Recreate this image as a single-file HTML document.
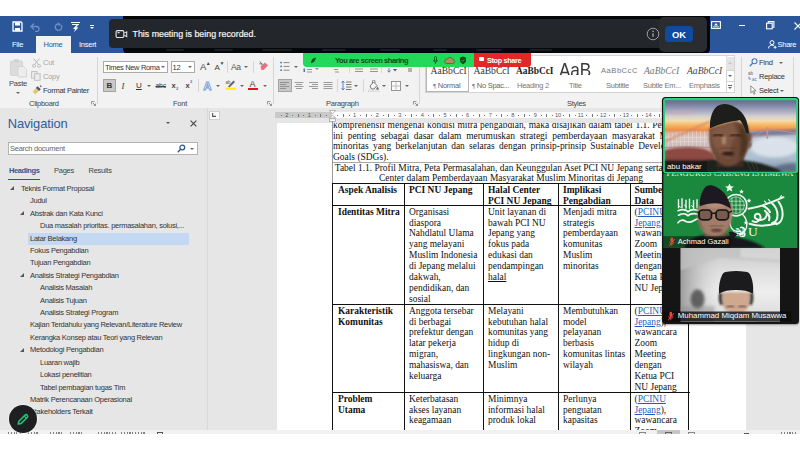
<!DOCTYPE html>
<html><head><meta charset="utf-8"><title>Word - Zoom share</title>
<style>
html,body{margin:0;padding:0;}
body{width:800px;height:450px;position:relative;overflow:hidden;background:#fff;font-family:"Liberation Sans",sans-serif;}
.a{position:absolute;}
.ui{font-family:"Liberation Sans",sans-serif;font-size:7.5px;letter-spacing:-0.26px;color:#333;white-space:nowrap;line-height:9px;}
.t{position:absolute;white-space:nowrap;}
.sep{position:absolute;width:1px;background:#d6d6d6;}
.doc{font-family:"Liberation Serif",serif;font-size:9.45px;line-height:11px;color:#111;}
.cell{position:absolute;white-space:nowrap;font-family:"Liberation Serif",serif;font-size:9.45px;line-height:10.9px;color:#111;}
.cell b{font-weight:bold;}
.lk{color:#1f5fbf;text-decoration:underline;}
.nav{position:absolute;font-family:"Liberation Sans",sans-serif;font-size:7.5px;letter-spacing:-0.26px;color:#333;white-space:nowrap;line-height:10px;}
.tri{position:absolute;width:0;height:0;border-left:4px solid transparent;border-bottom:4px solid #555;}
.dd{position:absolute;width:0;height:0;border-left:2px solid transparent;border-right:2px solid transparent;border-top:2.200px solid #666;}
</style></head>
<body>
<!-- ===== Title bar ===== -->
<div class="a" id="titlebar" style="left:0;top:16px;width:800px;height:37px;background:#2b579a;"></div>

<!-- quick access icons -->
<svg class="a" style="left:12px;top:21px" width="11" height="11" viewBox="0 0 11 11"><path d="M1 1h8l1 1v8H1z" fill="none" stroke="#fff" stroke-width="1.3"/><rect x="3" y="1.5" width="5" height="3" fill="#fff"/><rect x="3" y="7" width="5" height="3" fill="#fff"/></svg>
<svg class="a" style="left:30px;top:22px" width="11" height="10" viewBox="0 0 11 10"><path d="M2 4.5h4.5a2.5 2.5 0 0 1 0 5H5" fill="none" stroke="#6f8fc6" stroke-width="1.3"/><path d="M4 1.5L1 4.5l3 3" fill="none" stroke="#6f8fc6" stroke-width="1.3"/></svg>
<svg class="a" style="left:53px;top:22px" width="11" height="10" viewBox="0 0 11 10"><path d="M8.3 3.2A3.3 3.3 0 1 1 5 1.8" fill="none" stroke="#6f8fc6" stroke-width="1.3"/><path d="M5.2 0v3.6h3.4z" fill="#6f8fc6"/></svg>
<svg class="a" style="left:70px;top:21px" width="11" height="11" viewBox="0 0 11 11"><path d="M1 1.5h9M2 3.5h7" stroke="#fff" stroke-width="1.1"/><path d="M6.5 4L3 8h2.2L4 11l4.5-4.6H6.3L8 4z" fill="#fff"/></svg>
<div class="a" style="left:89.5px;top:24.5px;width:4px;height:1px;background:#fff"></div>
<div class="dd" style="left:89.5px;top:27px;border-top-color:#fff"></div>
<!-- tabs -->
<div class="a" style="left:36px;top:36px;width:34.5px;height:17px;background:#f2f2f2"></div>
<div class="t ui" style="left:12px;top:39.5px;color:#fff">File</div>
<div class="t ui" style="left:43.5px;top:39.5px;color:#2b579a">Home</div>
<div class="t ui" style="left:79px;top:39.5px;color:#fff">Insert</div>
<!-- window controls -->
<svg class="a" style="left:711px;top:21px" width="10" height="8" viewBox="0 0 10 8"><rect x=".6" y=".6" width="8.8" height="6.8" fill="none" stroke="#fff" stroke-width="1.1"/><path d="M5 2L3 4.6h4z" fill="#fff"/><path d="M2 5.8h6" stroke="#fff" stroke-width=".8"/></svg>
<div class="a" style="left:738.5px;top:25px;width:6.5px;height:1px;background:#fff"></div>
<svg class="a" style="left:766px;top:21px" width="9" height="9" viewBox="0 0 9 9"><rect x=".6" y="2.2" width="5.6" height="5.6" fill="none" stroke="#fff" stroke-width="1.1"/><path d="M2.3 2V.6h5.6v5.6H6.4" fill="none" stroke="#fff" stroke-width="1.1"/></svg>
<svg class="a" style="left:793.5px;top:21.5px" width="8" height="8" viewBox="0 0 8 8"><path d="M.5 .5l7 7M7.500 .5l-7 7" stroke="#fff" stroke-width="1.1"/></svg>
<svg class="a" style="left:767.5px;top:39.5px" width="9" height="9" viewBox="0 0 9 9"><circle cx="4" cy="2.6" r="2" fill="none" stroke="#fff" stroke-width="1"/><path d="M.6 8.400c0-2.200 1.500-3.300 3.400-3.300 1 0 1.700.3 2.200.8" fill="none" stroke="#fff" stroke-width="1"/><path d="M5.600 7.300h3M7.100 5.800v3" stroke="#fff" stroke-width=".9"/></svg>
<div class="t ui" style="left:777.5px;top:40px;color:#fff">Share</div>
<!-- zoom black band + toast -->
<div class="a" style="left:123px;top:16px;width:587px;height:37.500px;background:#060708;border-radius:0 0 5px 5px"></div>
<div class="a" style="left:166px;top:48.800px;width:18px;height:2.200px;background:#1b1d20;border-radius:1px"></div><div class="a" style="left:214px;top:48.800px;width:19px;height:2.200px;background:#1b1d20;border-radius:1px"></div><div class="a" style="left:262px;top:48.800px;width:30px;height:2.200px;background:#1b1d20;border-radius:1px"></div><div class="a" style="left:322px;top:48.800px;width:24px;height:2.200px;background:#1b1d20;border-radius:1px"></div><div class="a" style="left:380px;top:48.800px;width:20px;height:2.200px;background:#1b1d20;border-radius:1px"></div><div class="a" style="left:433px;top:48.800px;width:14px;height:2.200px;background:#1b1d20;border-radius:1px"></div><div class="a" style="left:476px;top:48.800px;width:26px;height:2.200px;background:#1b1d20;border-radius:1px"></div><div class="a" style="left:530px;top:48.800px;width:22px;height:2.200px;background:#1b1d20;border-radius:1px"></div>
<div class="a" style="left:108.500px;top:19px;width:553px;height:29px;background:#23262b;border-radius:4px"></div>
<div class="a" style="left:658.500px;top:17px;width:48px;height:34.500px;background:#2a2c2f;border-radius:5px"></div>
<svg class="a" style="left:115.300px;top:30px" width="13" height="8.600" viewBox="0 0 14 10"><rect x=".7" y=".7" width="9" height="8" rx="1.600" fill="none" stroke="#e6e6e6" stroke-width="1.300"/><path d="M10.300 3.600l2.800-1.500v5.600l-2.800-1.500" fill="none" stroke="#e6e6e6" stroke-width="1.200"/><rect x="2.400" y="2.400" width="2.400" height="1.400" fill="#e6e6e6"/></svg>
<div class="t" style="left:132.500px;top:29.200px;font-size:8.850px;line-height:11px;color:#f4f4f4;-webkit-text-stroke:.2px #f4f4f4">This meeting is being recorded.</div>
<svg class="a" style="left:646px;top:27px" width="14" height="14" viewBox="0 0 14 14"><circle cx="7" cy="7" r="5.800" fill="none" stroke="#9a9da2" stroke-width="1"/><path d="M7 6.200v3.600" stroke="#b4b6ba" stroke-width="1.200"/><circle cx="7" cy="4.300" r=".8" fill="#b4b6ba"/></svg>
<div class="a" style="left:665px;top:26px;width:28px;height:16px;background:#0e4a9e;border-radius:3.500px"></div>
<div class="t" style="left:665px;top:28.700px;width:28px;text-align:center;font-size:9.400px;line-height:11px;font-weight:bold;color:#fff">OK</div>
<!-- ===== Ribbon ===== -->
<div class="a" id="ribbon" style="left:0;top:53px;width:800px;height:55px;background:#f2f2f2;"></div>

<!-- clipboard group -->
<svg class="a" style="left:9px;top:58px" width="19" height="20" viewBox="0 0 19 20"><rect x="1.500" y="3" width="12" height="14.500" rx="1" fill="#dcdcdc" stroke="#cfcfcf" stroke-width=".8"/><rect x="5" y="1.200" width="5" height="3.400" rx="1" fill="#d0d0d0"/><path d="M9 8.500h5.500l3 3V19H9z" fill="#ececec" stroke="#d2d2d2" stroke-width=".8"/></svg>
<div class="t ui" style="left:9px;top:78.500px;color:#444">Paste</div>
<div class="dd" style="left:15.500px;top:91.500px"></div>
<svg class="a" style="left:32px;top:57.500px" width="9" height="10" viewBox="0 0 9 10"><path d="M1.500 .5l5 6M7.500 .5l-5 6" stroke="#b9b9b9" stroke-width="1"/><circle cx="2" cy="7.800" r="1.500" fill="none" stroke="#b9b9b9" stroke-width=".9"/><circle cx="7" cy="7.800" r="1.500" fill="none" stroke="#b9b9b9" stroke-width=".9"/></svg>
<div class="t ui" style="left:43px;top:58px;color:#a6a6a6">Cut</div>
<svg class="a" style="left:31px;top:71px" width="10" height="10" viewBox="0 0 10 10"><rect x=".6" y=".6" width="5.500" height="6.500" fill="#ededed" stroke="#bcbcbc" stroke-width=".9"/><rect x="3.600" y="2.800" width="5.500" height="6.500" fill="#ededed" stroke="#bcbcbc" stroke-width=".9"/></svg>
<div class="t ui" style="left:43px;top:71.500px;color:#a6a6a6">Copy</div>
<svg class="a" style="left:31.500px;top:85px" width="10" height="10" viewBox="0 0 10 10"><path d="M5.500 1.200L8.800 4.300 7 6 3.800 3z" fill="#555"/><path d="M3.600 3.400L6.600 6.200 3.200 9.400.6 6.600z" fill="#e8c471"/><path d="M8 .6l1.300 1.200" stroke="#555" stroke-width="1.200"/></svg>
<div class="t ui" style="left:43px;top:85.500px;color:#333">Format Painter</div>
<div class="t ui" style="left:29px;top:98.500px;color:#444">Clipboard</div>
<svg class="a lau" style="left:91px;top:101px" width="5" height="5" viewBox="0 0 5 5"><path d="M.4 3.500V.4h3.100" fill="none" stroke="#777" stroke-width=".8"/><path d="M1.800 1.800l2.600 2.600M4.500 2.600v2H2.600" fill="none" stroke="#777" stroke-width=".8"/></svg>
<div class="sep" style="left:97px;top:57px;height:47px"></div>
<!-- font group -->
<div class="a" style="left:102.500px;top:60.500px;width:65px;height:12px;background:#fff;border:.7px solid #ababab;box-sizing:border-box"></div>
<div class="t ui" style="left:105px;top:62.500px;color:#333;letter-spacing:-.34px">Times New Roma</div>
<div class="dd" style="left:161.300px;top:66px"></div>
<div class="a" style="left:170.500px;top:60.500px;width:24px;height:12px;background:#fff;border:.7px solid #ababab;box-sizing:border-box"></div>
<div class="t ui" style="left:172.500px;top:62.500px;color:#333">12</div>
<div class="dd" style="left:187.500px;top:66px"></div>
<div class="t" style="left:200px;top:61px;font-size:9.500px;line-height:11px;color:#444">A</div><div class="t" style="left:205.800px;top:59.500px;font-size:5px;line-height:6px;color:#444">▲</div>
<div class="t" style="left:214.500px;top:62.500px;font-size:8px;line-height:10px;color:#444">A</div><div class="t" style="left:219.500px;top:60px;font-size:5px;line-height:6px;color:#444">▼</div>
<div class="sep" style="left:227px;top:61px;height:12px"></div>
<div class="t" style="left:231px;top:61.500px;font-size:8.500px;line-height:10px;color:#555;letter-spacing:-.3px">Aa</div>
<div class="dd" style="left:243.500px;top:66px"></div>
<div class="sep" style="left:253px;top:61px;height:12px"></div>
<svg class="a" style="left:257.500px;top:59.500px" width="11" height="13" viewBox="0 0 11 13"><path d="M2.500 6.500L7 2.500l3 3-4.500 4.500H3.500z" fill="#e8707f"/><path d="M2 1.500l2.500 4" stroke="#777" stroke-width="1"/><path d="M1.400 3.800h3" stroke="#4b77be" stroke-width=".9"/></svg>
<div class="a" style="left:103px;top:79px;width:12.500px;height:13px;background:#c8c8c8;border:.8px solid #a3a3a3;box-sizing:border-box"></div>
<div class="t" style="left:106.500px;top:80.500px;font-size:8px;line-height:10px;font-weight:bold;color:#333">B</div>
<div class="t" style="left:121.500px;top:80.500px;font:italic 8.500px/10px 'Liberation Serif',serif;color:#333">I</div>
<div class="t" style="left:136px;top:80.500px;font-size:8px;line-height:10px;color:#333;text-decoration:underline">U</div>
<div class="dd" style="left:146.500px;top:85px"></div>
<div class="t" style="left:155.500px;top:80.500px;font-size:6.800px;line-height:10px;color:#444;text-decoration:line-through;letter-spacing:-.2px">abc</div>
<div class="t" style="left:171.500px;top:80.500px;font-size:7.500px;line-height:10px;font-weight:bold;color:#444">x</div><div class="t" style="left:176px;top:86px;font-size:4px;line-height:5px;font-weight:bold;color:#4b77be">2</div>
<div class="t" style="left:185.500px;top:80.500px;font-size:7.500px;line-height:10px;font-weight:bold;color:#444">x</div><div class="t" style="left:190px;top:79px;font-size:4px;line-height:5px;font-weight:bold;color:#4b77be">2</div>
<div class="sep" style="left:198px;top:79px;height:13px"></div>
<svg class="a" style="left:202px;top:78.500px" width="11" height="14" viewBox="0 0 11 14"><text x="5.500" y="11.300" text-anchor="middle" font-family="Liberation Sans, sans-serif" font-weight="bold" font-size="11.500" fill="#fafcff" stroke="#6c9ad6" stroke-width=".8">A</text></svg>
<div class="dd" style="left:215.500px;top:85px"></div>
<svg class="a" style="left:224.500px;top:79px" width="12" height="12" viewBox="0 0 12 12"><rect x=".5" y="8.800" width="10.500" height="2" fill="#fff200"/><path d="M3 7.500L8.500 1.500l1.500 1.500-5.500 5.500z" fill="#666"/><text x=".5" y="5" font-size="4.500" font-family="Liberation Sans" fill="#555">ab</text></svg>
<div class="dd" style="left:239.500px;top:85px"></div>
<div class="t" style="left:249.500px;top:79px;font-size:9px;line-height:10px;color:#444">A</div>
<div class="a" style="left:248px;top:88px;width:10px;height:2.200px;background:#e81123"></div>
<div class="dd" style="left:262.500px;top:85px"></div>
<div class="t ui" style="left:173px;top:98.500px;color:#444">Font</div>
<svg class="a" style="left:266.500px;top:101px" width="5" height="5" viewBox="0 0 5 5"><path d="M.4 3.500V.4h3.100" fill="none" stroke="#777" stroke-width=".8"/><path d="M1.800 1.800l2.600 2.600M4.500 2.600v2H2.600" fill="none" stroke="#777" stroke-width=".8"/></svg>
<div class="sep" style="left:273px;top:57px;height:47px"></div>
<!-- paragraph group -->
<svg class="a" style="left:279.500px;top:61px" width="10" height="11" viewBox="0 0 10 11"><g fill="#4b77be"><rect x=".3" y=".8" width="1.600" height="1.600"/><rect x=".3" y="4.600" width="1.600" height="1.600"/><rect x=".3" y="8.400" width="1.600" height="1.600"/></g><path d="M3.500 1.600h6M3.500 5.400h6M3.500 9.200h6" stroke="#8a8a8a" stroke-width="1"/></svg>
<div class="dd" style="left:293.500px;top:66px"></div>
<svg class="a" style="left:303px;top:67.500px" width="120" height="5" viewBox="0 0 120 5"><g stroke="#8a8a8a" stroke-width=".9"><path d="M4 1.500h5M4 4h5"/><path d="M31 1.500h4M32 4h4"/><path d="M52 1h8M52 3.500h8"/><path d="M67 1h8M67 3.500h8"/></g><rect x=".5" y=".5" width="1.500" height="3.500" fill="#4b77be"/><path d="M86 0v4M84.500 2.500L86 4.300l1.500-1.800" stroke="#4b77be" stroke-width=".9" fill="none"/><path d="M90 1l2 2.500 2-2.500z" fill="#555"/><path d="M106 0v4M108 0v4" stroke="#555" stroke-width=".8"/></svg>
<div class="dd" style="left:315px;top:67.500px;opacity:.7"></div>
<div class="sep" style="left:349px;top:67px;height:6px"></div>
<div class="sep" style="left:381px;top:67px;height:6px"></div>
<div class="a" style="left:278px;top:79px;width:13.500px;height:13px;background:#c8c8c8;border:.8px solid #a3a3a3;box-sizing:border-box"></div>
<svg class="a" style="left:280px;top:82px" width="56" height="8" viewBox="0 0 56 8"><g stroke="#858585" stroke-width=".8"><path d="M0 .5h9M0 2.500h6M0 4.500h9M0 6.500h6"/><path d="M14.500 .5h9M16 2.500h6M14.500 4.500h9M16 6.500h6"/><path d="M29 .5h9M32 2.500h6M29 4.500h9M32 6.500h6"/><path d="M43.500 .5h9M43.500 2.500h9M43.500 4.500h9M43.500 6.500h9"/></g></svg>
<div class="sep" style="left:337px;top:79px;height:13px"></div>
<svg class="a" style="left:340.500px;top:80px" width="11" height="11" viewBox="0 0 11 11"><path d="M2 1v9M.5 2.800L2 1l1.500 1.800M.5 8.200L2 10l1.500-1.800" fill="none" stroke="#4b77be" stroke-width=".9"/><path d="M5 2h5.500M5 4.500h5.500M5 7h5.500M5 9.500h5.500" stroke="#6a6a6a" stroke-width=".9"/></svg>
<div class="dd" style="left:353.500px;top:85px"></div>
<div class="sep" style="left:363px;top:79px;height:13px"></div>
<svg class="a" style="left:367.500px;top:79.500px" width="12" height="12" viewBox="0 0 12 12"><path d="M2 6L5.500 2l3.500 3.500L6 9H3.500z" fill="#f7f7f7" stroke="#6a6a6a" stroke-width=".9"/><path d="M4.500 3V1.200a1.200 1.200 0 0 1 2.400 0V3" fill="none" stroke="#6a6a6a" stroke-width=".8"/><path d="M9.500 6.500c.8 1.200 1.200 1.800 1.200 2.300a1.200 1.200 0 0 1-2.400 0c0-.5.400-1.100 1.200-2.300z" fill="#6a6a6a"/><rect x=".5" y="10" width="10.500" height="1.800" fill="#eee" stroke="#c8c8c8" stroke-width=".4"/></svg>
<div class="dd" style="left:381.500px;top:85px"></div>
<svg class="a" style="left:391px;top:80.500px" width="10" height="10" viewBox="0 0 10 10"><rect x=".5" y=".5" width="9" height="9" fill="#fafafa" stroke="#8a8a8a" stroke-width=".9"/><path d="M5 .5v9M.5 5h9" stroke="#b0b0b0" stroke-width=".8"/></svg>
<div class="dd" style="left:404.500px;top:85px"></div>
<div class="t ui" style="left:326px;top:98.500px;color:#444">Paragraph</div>
<svg class="a" style="left:412.500px;top:101px" width="5" height="5" viewBox="0 0 5 5"><path d="M.4 3.500V.4h3.100" fill="none" stroke="#777" stroke-width=".8"/><path d="M1.800 1.800l2.600 2.600M4.500 2.600v2H2.600" fill="none" stroke="#777" stroke-width=".8"/></svg>
<div class="sep" style="left:419px;top:57px;height:47px"></div>

<!-- styles gallery -->
<div class="a" style="left:425px;top:55px;width:309.500px;height:37.500px;background:#fff;border:.7px solid #d4d4d4;box-sizing:border-box"></div>
<div class="a" style="left:426px;top:57px;width:42.500px;height:34.500px;background:#fff;border:1.300px solid #b5b5b5;box-sizing:border-box"></div>
<div class="t" style="left:430.500px;top:65px;font:9.600px/12px 'Liberation Serif',serif;color:#333">AaBbCcI</div>
<div class="t ui" style="left:433px;top:80.500px;color:#666"><span style="font-size:6px">¶</span> Normal</div>
<div class="t" style="left:473.500px;top:65px;font:9.600px/12px 'Liberation Serif',serif;color:#333">AaBbCcI</div>
<div class="t ui" style="left:472px;top:80.500px;color:#666"><span style="font-size:6px">¶</span> No Spac...</div>
<div class="t" style="left:516px;top:65px;font:bold 9.400px/12px 'Liberation Serif',serif;color:#222">AaBbCcI</div>
<div class="t ui" style="left:517px;top:80.500px;color:#777">Heading 2</div>
<div class="a" style="left:555px;top:57px;width:42px;height:18px;overflow:hidden"><div class="t" style="left:4px;top:1.500px;font-size:17.200px;line-height:18px;color:#3a3a3a;letter-spacing:-.1px;transform:scaleY(1.22);transform-origin:0 0">AaB</div></div>
<div class="t ui" style="left:569px;top:80.500px;color:#777">Title</div>
<div class="t" style="left:601px;top:66px;font-size:7.700px;line-height:10px;color:#7a7a7a;letter-spacing:.45px">AaBbCcC</div>
<div class="t ui" style="left:606px;top:80.500px;color:#777">Subtitle</div>
<div class="t" style="left:644px;top:65px;font:italic 9.600px/12px 'Liberation Serif',serif;color:#777">AaBbCcI</div>
<div class="t ui" style="left:643px;top:80.500px;color:#777">Subtle Em...</div>
<div class="t" style="left:687px;top:65px;font:italic 9.600px/12px 'Liberation Serif',serif;color:#444">AaBbCcI</div>
<div class="t ui" style="left:689px;top:80.500px;color:#777">Emphasis</div>
<div class="a" style="left:725.500px;top:55px;width:9px;height:37.500px;background:#fff;border:.7px solid #d4d4d4;box-sizing:border-box"></div>
<div class="a" style="left:726px;top:57px;width:8px;height:13px;background:#e4e4e4"></div>
<div class="a" style="left:726px;top:70px;width:8px;height:.7px;background:#d4d4d4"></div>
<div class="a" style="left:726px;top:81px;width:8px;height:.7px;background:#d4d4d4"></div>
<div class="dd" style="left:728px;top:62px;border-top:none;border-bottom:2px solid #c4c4c4"></div>
<div class="dd" style="left:728px;top:75px;border-top-color:#666"></div>
<div class="a" style="left:728px;top:84.500px;width:4px;height:.8px;background:#666"></div>
<div class="dd" style="left:728px;top:86.500px;border-top-color:#666"></div>
<div class="t ui" style="left:567px;top:98.500px;color:#444">Styles</div>
<div class="sep" style="left:740.500px;top:57px;height:47px"></div>
<!-- editing -->
<svg class="a" style="left:748.500px;top:58px" width="9" height="9" viewBox="0 0 9 9"><circle cx="5.500" cy="3.300" r="2.500" fill="none" stroke="#4b77be" stroke-width="1.100"/><path d="M3.600 5.300L.8 8.200" stroke="#4b77be" stroke-width="1.300"/></svg>
<div class="t ui" style="left:759px;top:58px;color:#333">Find</div>
<div class="dd" style="left:778.500px;top:62px"></div>
<svg class="a" style="left:748px;top:71px" width="10" height="10" viewBox="0 0 10 10"><text x="0" y="4.200" font-size="4.500" font-family="Liberation Sans" fill="#666">ab</text><text x="4" y="9.500" font-size="4.500" font-family="Liberation Sans" fill="#4b77be">ac</text><path d="M1 5.500v2.500h2" fill="none" stroke="#4b77be" stroke-width=".8"/></svg>
<div class="t ui" style="left:759px;top:71.500px;color:#333">Replace</div>
<svg class="a" style="left:749.500px;top:84.500px" width="7" height="10" viewBox="0 0 7 10"><path d="M.8 .8v7l1.800-1.600 1.300 3 1.100-.5-1.300-2.900h2.400z" fill="#fafafa" stroke="#777" stroke-width=".8"/></svg>
<div class="t ui" style="left:759px;top:85.500px;color:#333">Select</div>
<div class="dd" style="left:780px;top:89.500px"></div>
<div class="sep" style="left:792.500px;top:57px;height:47px"></div>
<!-- zoom sharing bar -->
<div class="a" style="left:302.500px;top:53px;width:172px;height:14px;background:#23d959;border-radius:0 0 0 4px"></div>
<svg class="a" style="left:309.500px;top:56.500px" width="7" height="7" viewBox="0 0 7 7"><path d="M1 6c0-3 1.500-5 5-5.500C5.500 3 4.500 5.500 1.500 6.200z" fill="#0b4a1d"/></svg>
<div class="t" style="left:335px;top:55.500px;font-size:7.500px;line-height:9px;font-weight:bold;color:#0b4a1d;letter-spacing:-.42px">You are screen sharing</div>
<svg class="a" style="left:432px;top:55.500px" width="36" height="9" viewBox="0 0 36 9"><path d="M3.500 .5a1 1 0 0 1 1 1v2.500a1 1 0 0 1-2 0V1.500a1 1 0 0 1 1-1zM1.500 4a2 2 0 0 0 4 0M3.500 6v2" fill="none" stroke="#0b6a2a" stroke-width="1"/><path d="M14.500 7.500h6a2 2 0 0 0 .3-4 3 3 0 0 0-5.600-.4 2.200 2.200 0 0 0-.7 4.400z" fill="#b98a5a" stroke="#0b6a2a" stroke-width=".6"/><path d="M31 .6l3 1.100v2.800c0 1.800-1.300 3-3 3.800-1.700-.8-3-2-3-3.800V1.700z" fill="#0b4a1d"/><path d="M29.600 4.300l1 1 1.800-2" fill="none" stroke="#23d959" stroke-width=".8"/></svg>
<div class="a" style="left:474px;top:53px;width:56.500px;height:14.300px;background:#e02828;border-radius:0 0 3px 0"></div>
<div class="a" style="left:479px;top:56.500px;width:4.500px;height:4.500px;background:#fff;border-radius:.8px"></div>
<div class="t" style="left:487px;top:55.500px;font-size:7.300px;line-height:9px;font-weight:bold;color:#fff;letter-spacing:-.35px">Stop share</div>
<!-- ===== Workspace ===== -->
<div class="a" id="work" style="left:0;top:108px;width:800px;height:322px;background:#e6e6e6;"></div>

<!-- navigation pane -->
<div class="a" style="left:206.500px;top:108px;width:1px;height:321.500px;background:#d9d9d9"></div>
<div class="t" style="left:7.800px;top:116.300px;font-size:12.900px;line-height:16px;color:#2e5c9e;letter-spacing:-.12px">Navigation</div>
<div class="dd" style="left:166px;top:122px;border-left-width:2.500px;border-right-width:2.500px;border-top-width:2.500px;border-top-color:#555"></div>
<svg class="a" style="left:190px;top:120px" width="7" height="7" viewBox="0 0 7 7"><path d="M.6 .6l5.800 5.800M6.400 .6L.6 6.400" stroke="#444" stroke-width="1.100"/></svg>
<div class="a" style="left:8px;top:141.500px;width:189.500px;height:13.500px;background:#fff;border:.8px solid #b3b3b3;box-sizing:border-box"></div>
<div class="t ui" style="left:10px;top:144px;color:#666">Search document</div>
<svg class="a" style="left:176.500px;top:144px" width="9" height="9" viewBox="0 0 9 9"><circle cx="5.300" cy="3.500" r="2.400" fill="none" stroke="#2b579a" stroke-width="1.200"/><path d="M3.600 5.300L.8 8.200" stroke="#2b579a" stroke-width="1.400"/></svg>
<div class="dd" style="left:189.500px;top:148px"></div>
<div class="t ui" style="left:9px;top:165.500px;color:#2b579a;font-weight:bold;letter-spacing:-.42px">Headings</div>
<div class="a" style="left:8px;top:178.500px;width:31.500px;height:1.600px;background:#2b579a"></div>
<div class="t ui" style="left:54px;top:165.500px;color:#444">Pages</div>
<div class="t ui" style="left:88.500px;top:165.500px;color:#444">Results</div>
<div class="a" style="left:28px;top:233px;width:160.500px;height:12.300px;background:#c3d9f3"></div>
<div class="nav" style="left:21px;top:183.8px">Teknis Format Proposal</div>
<div class="tri" style="left:9.5px;top:186.3px"></div>
<div class="nav" style="left:30px;top:196.2px">Judul</div>
<div class="nav" style="left:30px;top:208.6px">Abstrak dan Kata Kunci</div>
<div class="tri" style="left:19.5px;top:211.1px"></div>
<div class="nav" style="left:40px;top:221.1px">Dua masalah prioritas. permasalahan, solusi,...</div>
<div class="nav" style="left:30px;top:233.5px">Latar Belakang</div>
<div class="nav" style="left:30px;top:245.9px">Fokus Pengabdian</div>
<div class="nav" style="left:30px;top:258.3px">Tujuan Pengabdian</div>
<div class="nav" style="left:30px;top:270.7px">Analisis Strategi Pengabdian</div>
<div class="tri" style="left:19.5px;top:273.2px"></div>
<div class="nav" style="left:40px;top:283.2px">Analisis Masalah</div>
<div class="nav" style="left:40px;top:295.6px">Analisis Tujuan</div>
<div class="nav" style="left:40px;top:308.0px">Analisis Strategi Program</div>
<div class="nav" style="left:30px;top:320.4px">Kajian Terdahulu yang Relevan/Literature Review</div>
<div class="nav" style="left:30px;top:332.8px">Kerangka Konsep atau Teori yang Relevan</div>
<div class="nav" style="left:30px;top:345.3px">Metodologi Pengabdian</div>
<div class="tri" style="left:19.5px;top:347.8px"></div>
<div class="nav" style="left:40px;top:357.7px">Luaran wajib</div>
<div class="nav" style="left:40px;top:370.1px">Lokasi penelitian</div>
<div class="nav" style="left:40px;top:382.5px">Tabel pembagian tugas Tim</div>
<div class="nav" style="left:30px;top:394.9px">Matrik Perencanaan Operasional</div>
<div class="nav" style="left:30px;top:407.4px">Stakeholders Terkait</div>

<div class="a" style="left:9.300px;top:405.300px;width:27.400px;height:27.400px;border-radius:14px;background:#1e1f21;z-index:5;box-shadow:0 0 0 .8px rgba(255,255,255,.55)"></div>
<svg class="a" style="left:16px;top:412px;z-index:6" width="14" height="14" viewBox="0 0 14 14"><path d="M2.200 12l.7-2.800L9 3.100a1.500 1.500 0 0 1 2.100 0l.2.200a1.500 1.500 0 0 1 0 2.100L5.200 11.400z" fill="none" stroke="#1fc774" stroke-width="1.500" stroke-linejoin="round"/><path d="M8.300 4.200l1.800 1.800" stroke="#1fc774" stroke-width="1.200"/></svg>

<!-- document area -->
<div class="a" style="left:208.500px;top:110.500px;width:11px;height:9px;background:#fafafa;border:.7px solid #d0d0d0;box-sizing:border-box"></div>
<svg class="a" style="left:212px;top:113px" width="4" height="4" viewBox="0 0 4 4"><path d="M.6 0v3.400H4" fill="none" stroke="#555" stroke-width="1.100"/></svg>
<!-- ruler -->
<div class="a" style="left:274.500px;top:112.200px;width:57.500px;height:6.300px;background:#c9c9c9"></div>
<div class="a" style="left:332px;top:112.200px;width:330px;height:6.300px;background:#fdfdfd"></div>
<div class="a" style="left:280.80px;top:114.90px;width:.7px;height:0.9px;background:#777"></div>
<div class="t" style="left:282.8px;top:112.300px;width:8px;text-align:center;font-size:5.600px;line-height:6.200px;color:#555">2</div>
<div class="a" style="left:292.10px;top:114.90px;width:.7px;height:0.9px;background:#777"></div>
<div class="a" style="left:297.75px;top:114.15px;width:.7px;height:2.4px;background:#777"></div>
<div class="a" style="left:303.40px;top:114.90px;width:.7px;height:0.9px;background:#777"></div>
<div class="t" style="left:305.4px;top:112.300px;width:8px;text-align:center;font-size:5.600px;line-height:6.200px;color:#555">1</div>
<div class="a" style="left:314.70px;top:114.90px;width:.7px;height:0.9px;background:#777"></div>
<div class="a" style="left:320.35px;top:114.15px;width:.7px;height:2.4px;background:#777"></div>
<div class="a" style="left:326.00px;top:114.90px;width:.7px;height:0.9px;background:#777"></div>
<div class="a" style="left:337.30px;top:114.90px;width:.7px;height:0.9px;background:#777"></div>
<div class="a" style="left:342.95px;top:114.15px;width:.7px;height:2.4px;background:#777"></div>
<div class="a" style="left:348.60px;top:114.90px;width:.7px;height:0.9px;background:#777"></div>
<div class="t" style="left:350.6px;top:112.300px;width:8px;text-align:center;font-size:5.600px;line-height:6.200px;color:#555">1</div>
<div class="a" style="left:359.90px;top:114.90px;width:.7px;height:0.9px;background:#777"></div>
<div class="a" style="left:365.55px;top:114.15px;width:.7px;height:2.4px;background:#777"></div>
<div class="a" style="left:371.20px;top:114.90px;width:.7px;height:0.9px;background:#777"></div>
<div class="t" style="left:373.2px;top:112.300px;width:8px;text-align:center;font-size:5.600px;line-height:6.200px;color:#555">2</div>
<div class="a" style="left:382.50px;top:114.90px;width:.7px;height:0.9px;background:#777"></div>
<div class="a" style="left:388.15px;top:114.15px;width:.7px;height:2.4px;background:#777"></div>
<div class="a" style="left:393.80px;top:114.90px;width:.7px;height:0.9px;background:#777"></div>
<div class="t" style="left:395.8px;top:112.300px;width:8px;text-align:center;font-size:5.600px;line-height:6.200px;color:#555">3</div>
<div class="a" style="left:405.10px;top:114.90px;width:.7px;height:0.9px;background:#777"></div>
<div class="a" style="left:410.75px;top:114.15px;width:.7px;height:2.4px;background:#777"></div>
<div class="a" style="left:416.40px;top:114.90px;width:.7px;height:0.9px;background:#777"></div>
<div class="t" style="left:418.4px;top:112.300px;width:8px;text-align:center;font-size:5.600px;line-height:6.200px;color:#555">4</div>
<div class="a" style="left:427.70px;top:114.90px;width:.7px;height:0.9px;background:#777"></div>
<div class="a" style="left:433.35px;top:114.15px;width:.7px;height:2.4px;background:#777"></div>
<div class="a" style="left:439.00px;top:114.90px;width:.7px;height:0.9px;background:#777"></div>
<div class="t" style="left:441.0px;top:112.300px;width:8px;text-align:center;font-size:5.600px;line-height:6.200px;color:#555">5</div>
<div class="a" style="left:450.30px;top:114.90px;width:.7px;height:0.9px;background:#777"></div>
<div class="a" style="left:455.95px;top:114.15px;width:.7px;height:2.4px;background:#777"></div>
<div class="a" style="left:461.60px;top:114.90px;width:.7px;height:0.9px;background:#777"></div>
<div class="t" style="left:463.6px;top:112.300px;width:8px;text-align:center;font-size:5.600px;line-height:6.200px;color:#555">6</div>
<div class="a" style="left:472.90px;top:114.90px;width:.7px;height:0.9px;background:#777"></div>
<div class="a" style="left:478.55px;top:114.15px;width:.7px;height:2.4px;background:#777"></div>
<div class="a" style="left:484.20px;top:114.90px;width:.7px;height:0.9px;background:#777"></div>
<div class="t" style="left:486.2px;top:112.300px;width:8px;text-align:center;font-size:5.600px;line-height:6.200px;color:#555">7</div>
<div class="a" style="left:495.50px;top:114.90px;width:.7px;height:0.9px;background:#777"></div>
<div class="a" style="left:501.15px;top:114.15px;width:.7px;height:2.4px;background:#777"></div>
<div class="a" style="left:506.80px;top:114.90px;width:.7px;height:0.9px;background:#777"></div>
<div class="t" style="left:508.8px;top:112.300px;width:8px;text-align:center;font-size:5.600px;line-height:6.200px;color:#555">8</div>
<div class="a" style="left:518.10px;top:114.90px;width:.7px;height:0.9px;background:#777"></div>
<div class="a" style="left:523.75px;top:114.15px;width:.7px;height:2.4px;background:#777"></div>
<div class="a" style="left:529.40px;top:114.90px;width:.7px;height:0.9px;background:#777"></div>
<div class="t" style="left:531.4px;top:112.300px;width:8px;text-align:center;font-size:5.600px;line-height:6.200px;color:#555">9</div>
<div class="a" style="left:540.70px;top:114.90px;width:.7px;height:0.9px;background:#777"></div>
<div class="a" style="left:546.35px;top:114.15px;width:.7px;height:2.4px;background:#777"></div>
<div class="a" style="left:552.00px;top:114.90px;width:.7px;height:0.9px;background:#777"></div>
<div class="t" style="left:554.0px;top:112.300px;width:8px;text-align:center;font-size:5.600px;line-height:6.200px;color:#555">10</div>
<div class="a" style="left:563.30px;top:114.90px;width:.7px;height:0.9px;background:#777"></div>
<div class="a" style="left:568.95px;top:114.15px;width:.7px;height:2.4px;background:#777"></div>
<div class="a" style="left:574.60px;top:114.90px;width:.7px;height:0.9px;background:#777"></div>
<div class="t" style="left:576.6px;top:112.300px;width:8px;text-align:center;font-size:5.600px;line-height:6.200px;color:#555">11</div>
<div class="a" style="left:585.90px;top:114.90px;width:.7px;height:0.9px;background:#777"></div>
<div class="a" style="left:591.55px;top:114.15px;width:.7px;height:2.4px;background:#777"></div>
<div class="a" style="left:597.20px;top:114.90px;width:.7px;height:0.9px;background:#777"></div>
<div class="t" style="left:599.2px;top:112.300px;width:8px;text-align:center;font-size:5.600px;line-height:6.200px;color:#555">12</div>
<div class="a" style="left:608.50px;top:114.90px;width:.7px;height:0.9px;background:#777"></div>
<div class="a" style="left:614.15px;top:114.15px;width:.7px;height:2.4px;background:#777"></div>
<div class="a" style="left:619.80px;top:114.90px;width:.7px;height:0.9px;background:#777"></div>
<div class="t" style="left:621.8px;top:112.300px;width:8px;text-align:center;font-size:5.600px;line-height:6.200px;color:#555">13</div>
<div class="a" style="left:631.10px;top:114.90px;width:.7px;height:0.9px;background:#777"></div>
<div class="a" style="left:636.75px;top:114.15px;width:.7px;height:2.4px;background:#777"></div>
<div class="a" style="left:642.40px;top:114.90px;width:.7px;height:0.9px;background:#777"></div>
<div class="t" style="left:644.4px;top:112.300px;width:8px;text-align:center;font-size:5.600px;line-height:6.200px;color:#555">14</div>
<div class="a" style="left:653.70px;top:114.90px;width:.7px;height:0.9px;background:#777"></div>
<div class="a" style="left:659.35px;top:114.15px;width:.7px;height:2.4px;background:#777"></div>

<!-- page -->
<div class="a" style="left:277px;top:122.500px;width:469px;height:307px;background:#fff"></div>
<div class="a" style="left:332.300px;top:118.500px;width:.8px;height:311px;background:#9a9a9a"></div>
<div class="a" style="left:332.500px;top:162.2px;width:330px;height:.8px;background:#a8a8a8"></div>
<svg class="a" style="left:327.500px;top:109.500px" width="9" height="13" viewBox="0 0 9 13"><path d="M1.500 .5h6L4.500 4z" fill="#fff" stroke="#999" stroke-width=".7"/><path d="M4.500 5L7.500 8h-6z" fill="#fff" stroke="#999" stroke-width=".7"/><rect x="1.500" y="8.800" width="6" height="2.600" fill="#fff" stroke="#999" stroke-width=".7"/></svg>
<div class="a" id="doctext" style="left:0;top:122.500px;width:800px;height:307px;overflow:hidden">
<div class="a" style="left:0;top:-122.500px">
<div class="a doc" style="left:333px;top:119.55px;width:356px;text-align:justify;text-align-last:justify;white-space:nowrap;">komprehensif mengenai kondisi mitra pengabdian, maka disajikan dalam tabel 1.1. Pemetaan</div>
<div class="a doc" style="left:333px;top:130.55px;width:356px;text-align:justify;text-align-last:justify;white-space:nowrap;">ini penting sebagai dasar dalam merumuskan strategi pemberdayaan masyarakat Muslim</div>
<div class="a doc" style="left:333px;top:140.55px;width:356px;text-align:justify;text-align-last:justify;white-space:nowrap;">minoritas yang berkelanjutan dan selaras dengan prinsip-prinsip Sustainable Development</div>
<div class="a doc" style="left:333px;top:151.55px;white-space:nowrap">Goals (SDGs).</div>
<div class="a doc" style="left:332.2px;top:162.55px;width:356px;text-align:center;white-space:nowrap">Tabel 1.1. Profil Mitra, Peta Permasalahan, dan Keunggulan Aset PCI NU Jepang serta Halal</div>
<div class="a doc" style="left:333px;top:172.55px;width:356px;text-align:center;white-space:nowrap">Center dalam Pemberdayaan Masyarakat Muslim Minoritas di Jepang</div>
<div class="a" style="left:332.1px;top:183.1px;width:1.100px;height:260px;background:#111"></div>
<div class="a" style="left:403.7px;top:183.1px;width:1.100px;height:260px;background:#111"></div>
<div class="a" style="left:483.3px;top:183.1px;width:1.100px;height:260px;background:#111"></div>
<div class="a" style="left:557.5px;top:183.1px;width:1.100px;height:260px;background:#111"></div>
<div class="a" style="left:629.5px;top:183.1px;width:1.100px;height:260px;background:#111"></div>
<div class="a" style="left:688.3px;top:183.1px;width:1.100px;height:260px;background:#111"></div>
<div class="a" style="left:332px;top:183.1px;width:357.500px;height:1.100px;background:#111"></div>
<div class="a" style="left:332px;top:205.0px;width:357.500px;height:1.100px;background:#111"></div>
<div class="a" style="left:332px;top:304.0px;width:357.500px;height:1.100px;background:#111"></div>
<div class="a" style="left:332px;top:391.5px;width:357.500px;height:1.100px;background:#111"></div>
<div class="cell" style="left:338px;top:184.6px"><b>Aspek Analisis</b></div>
<div class="cell" style="left:409px;top:184.6px"><b>PCI NU Jepang</b></div>
<div class="cell" style="left:488px;top:184.6px"><b>Halal Center<br>PCI NU Jepang</b></div>
<div class="cell" style="left:563px;top:184.6px"><b>Implikasi<br>Pengabdian</b></div>
<div class="cell" style="left:634.5px;top:184.6px"><b>Sumber<br>Data</b></div>
<div class="cell" style="left:338px;top:206.6px"><b>Identitas Mitra</b></div>
<div class="cell" style="left:409px;top:206.6px">Organisasi<br>diaspora<br>Nahdlatul Ulama<br>yang melayani<br>Muslim Indonesia<br>di Jepang melalui<br>dakwah,<br>pendidikan, dan<br>sosial</div>
<div class="cell" style="left:488px;top:206.6px">Unit layanan di<br>bawah PCI NU<br>Jepang yang<br>fokus pada<br>edukasi dan<br>pendampingan<br><u>halal</u></div>
<div class="cell" style="left:563px;top:206.6px">Menjadi mitra<br>strategis<br>pemberdayaan<br>komunitas<br>Muslim<br>minoritas</div>
<div class="cell" style="left:634.5px;top:206.6px">(<span class="lk">PCINU</span><br><span class="lk">Jepang</span>),<br>wawancara<br>Zoom<br>Meeting<br>dengan<br>Ketua PCI<br>NU Jepang</div>
<div class="cell" style="left:338px;top:305.6px"><b>Karakteristik<br>Komunitas</b></div>
<div class="cell" style="left:409px;top:305.6px">Anggota tersebar<br>di berbagai<br>prefektur dengan<br>latar pekerja<br>migran,<br>mahasiswa, dan<br>keluarga</div>
<div class="cell" style="left:488px;top:305.6px">Melayani<br>kebutuhan halal<br>komunitas yang<br>hidup di<br>lingkungan non-<br>Muslim</div>
<div class="cell" style="left:563px;top:305.6px">Membutuhkan<br>model<br>pelayanan<br>berbasis<br>komunitas lintas<br>wilayah</div>
<div class="cell" style="left:634.5px;top:305.6px">(<span class="lk">PCINU</span><br><span class="lk">Jepang</span>),<br>wawancara<br>Zoom<br>Meeting<br>dengan<br>Ketua PCI<br>NU Jepang</div>
<div class="cell" style="left:338px;top:393.6px"><b>Problem<br>Utama</b></div>
<div class="cell" style="left:409px;top:393.6px">Keterbatasan<br>akses layanan<br>keagamaan</div>
<div class="cell" style="left:488px;top:393.6px">Minimnya<br>informasi halal<br>produk lokal</div>
<div class="cell" style="left:563px;top:393.6px">Perlunya<br>penguatan<br>kapasitas</div>
<div class="cell" style="left:634.5px;top:393.6px">(<span class="lk">PCINU</span><br><span class="lk">Jepang</span>),<br>wawancara<br>Zoom</div>

</div></div>

<!-- video panel -->
<div class="a" style="left:661.500px;top:96.800px;width:137px;height:227.500px;background:#151515;border-radius:3.500px;box-shadow:0 1px 2px rgba(0,0,0,.35)"></div>
<svg class="a" style="left:661.500px;top:96.800px" width="137" height="228" viewBox="661.500 96.800 137 228">
<defs>
<linearGradient id="sky" x1="0" y1="0" x2="0" y2="1"><stop offset="0" stop-color="#5f6688"/><stop offset=".15" stop-color="#7a80a2"/><stop offset=".34" stop-color="#a5a8c0"/><stop offset=".5" stop-color="#d2cfd0"/><stop offset=".63" stop-color="#f2dcae"/><stop offset=".77" stop-color="#f6b562"/><stop offset=".9" stop-color="#ef8f48"/><stop offset="1" stop-color="#dd9c80"/></linearGradient>
<linearGradient id="sea" x1="0" y1="0" x2="0" y2="1"><stop offset="0" stop-color="#a8b2c8"/><stop offset=".2" stop-color="#c3cddb"/><stop offset=".65" stop-color="#aebfd0"/><stop offset="1" stop-color="#7b8fa5"/></linearGradient>
<linearGradient id="haze" x1="0" y1="0" x2="0" y2="1"><stop offset="0" stop-color="#dcae98"/><stop offset=".15" stop-color="#d9c4c0"/><stop offset=".4" stop-color="#c9b8b8"/><stop offset="1" stop-color="#9a8482"/></linearGradient>
<linearGradient id="room" x1="0" y1="0" x2="0" y2="1"><stop offset="0" stop-color="#c6c6c6"/><stop offset=".3" stop-color="#dedede"/><stop offset=".6" stop-color="#eeeeee"/><stop offset="1" stop-color="#d8d8d8"/></linearGradient>
<linearGradient id="roomL" x1="0" y1="0" x2="1" y2="0"><stop offset="0" stop-color="#9c9c9c"/><stop offset="1" stop-color="#cfcfcf" stop-opacity="0"/></linearGradient>
<radialGradient id="face1" cx=".4" cy=".45" r=".7"><stop offset="0" stop-color="#a4745a"/><stop offset=".6" stop-color="#8a5b44"/><stop offset="1" stop-color="#55382b"/></radialGradient>
<radialGradient id="face2" cx=".5" cy=".5" r=".65"><stop offset="0" stop-color="#b18a74"/><stop offset=".7" stop-color="#98715d"/><stop offset="1" stop-color="#6a4c3e"/></radialGradient>
<filter id="b1" x="-20%" y="-20%" width="140%" height="140%"><feGaussianBlur stdDeviation=".8"/></filter>
<filter id="b2" x="-30%" y="-30%" width="160%" height="160%"><feGaussianBlur stdDeviation="1.800"/></filter>
<clipPath id="c1"><rect x="664.400" y="100" width="131.500" height="71.800"/></clipPath>
<clipPath id="c2"><rect x="662.700" y="173.400" width="134.200" height="74.300"/></clipPath>
<clipPath id="c3"><rect x="680" y="247.700" width="99.500" height="73.800"/></clipPath>
</defs>
<!-- P1 -->
<rect x="662.600" y="97.700" width="135" height="75.500" rx="3" fill="#27d37f"/>
<g clip-path="url(#c1)">
<rect x="664" y="99" width="132" height="34" fill="url(#sky)"/>
<rect x="664" y="131.500" width="70" height="41" fill="url(#haze)"/>
<rect x="730" y="131" width="66" height="41" fill="url(#sea)"/>
<ellipse cx="680" cy="112" rx="14" ry="2" fill="#c9a9b0" opacity=".55" filter="url(#b1)"/>
<path d="M738 133.500c18-3.500 40-3.500 58-4.500v5c-20 1-40 2-58 3z" fill="#7b7e98" filter="url(#b1)"/>
<ellipse cx="774" cy="147" rx="24" ry="10" fill="#e2e8ef" opacity=".8" filter="url(#b2)"/>
<g stroke="#efe4e2" stroke-width=".6" opacity=".75"><path d="M668 134v13M672 133v14M676 132v15M680 131.500v15M684 131v15M688 131v15M692 131v15M696 131v15M700 131v15M704 131v15M708 131v15"/><path d="M664 137h46M664 141.500h46"/></g>
<path d="M664 141.500L710 121" stroke="#d08a62" stroke-width="1.600" filter="url(#b1)"/>
<path d="M664 147.500c14-1 30-1 46 0" stroke="#b98a84" stroke-width="1.200" fill="none" opacity=".8"/>
<path d="M664 150c10-3 24-4 36-2 8 1.500 12 4 14 8v16h-50z" fill="#8e4a42" filter="url(#b1)"/>
<path d="M766.800 127v11.500" stroke="#cf8e86" stroke-width="1.700"/><path d="M748 140L766.500 128.500 796 133" stroke="#c98f88" stroke-width="1" fill="none" opacity=".85"/>
<path d="M770 172c2-6 12-9 26-9v9z" fill="#5f7085" filter="url(#b2)"/>
<path d="M664 160h52v12h-52z" fill="#2a2422" filter="url(#b2)"/>
<path d="M688 172c2-6 10-10 24-12h30c16 2 30 5 40 12z" fill="#1c201c" filter="url(#b1)"/>
<path d="M716 154h27v13h-27z" fill="#3c2a22" filter="url(#b1)"/>
<path d="M709 128c-1.500 10 0 20 4 27 3 6 8 10.500 14 11 7 0 13-4 17-10 2.500-4 4-9 4.500-14l2.500-1v-7l-2.500-1.500-1-7-12-5z" fill="#6d4937" filter="url(#b1)"/>
<path d="M711 130c4-3 12-6 22-8l4 12c-6 6-8 14-8 24-8-1-14-8-17-16-1-4-1.500-8-1-12z" fill="#8a5f48" opacity=".7" filter="url(#b2)"/>
<path d="M738 124c5 3 9 9 9.500 18-.5 8-4 14-9 18 2-10 2.500-22-.5-36z" fill="#47301f" opacity=".85" filter="url(#b2)"/>
<ellipse cx="723.500" cy="140" rx="2.200" ry="4.500" fill="#b8917a" opacity=".8" filter="url(#b1)"/>
<path d="M713 135.500c3-1.500 7-1.500 9.500 0M730 135.500c3-1.500 7-1.500 10 .5" stroke="#2c1c16" stroke-width="2.200" fill="none" filter="url(#b1)"/>
<ellipse cx="727.500" cy="153.500" rx="6" ry="1.900" fill="#2a1712" filter="url(#b1)"/>
<path d="M718 149c5-2 13-2 18 0" stroke="#4a3026" stroke-width="1.600" fill="none" opacity=".6" filter="url(#b2)"/>
<path d="M709.500 128c-.5-8 1.500-16 5.500-20.500 3-3.500 9-4.500 14-3 8 2.500 14 8 17 16 1 3.500 2 8 2.500 13l-3-1c-1-5-3-9-6-12.500-10 1-20 3.500-30 8z" fill="#1d1e1c"/>
<path d="M748 142c2-1.500 3.500 0 3 2.500s-2 4-3.500 4z" fill="#6b4735" filter="url(#b1)"/>
<g stroke="#6a6f60" stroke-width=".9" opacity=".35"><path d="M746 161l5 10M750 160.500l5 10M754 161l4 9"/></g>
</g>
<rect x="664.400" y="161" width="42" height="10.800" fill="#0a0808" opacity=".35"/>
<!-- /P1 -->
<!-- P2 -->
<g clip-path="url(#c2)">
<rect x="662.700" y="173" width="135" height="75" fill="#1a893d"/>
<text x="666" y="176.300" font-family="Liberation Serif, serif" font-size="8.500" fill="#eef6ee" textLength="127" lengthAdjust="spacingAndGlyphs">PENGURUS CABANG ISTIMEWA</text>
<g fill="none" stroke="#f2f7f2" stroke-linecap="round">
<circle cx="735.500" cy="205" r="10.800" stroke-width="1.500"/>
<circle cx="735.500" cy="205" r="8.300" stroke-width=".5"/>
<path d="M727.500 201h16M727 205h17M727.500 209h16M731.500 197.500v15M735.500 196.500v17M739.500 197.500v15" stroke-width=".6"/>
<path d="M731 215c-2 4-2 9 0 13 2 3 6 4 9 3M742 214c3 3 5 8 4 13-1 4-3 7-7 8M733 232c3 2 8 2 11 0" stroke-width="1.300"/>
<path d="M678 199.500v8M681.500 198.500v9M685.500 200v8M689 199v9M693 200.500v8M696.500 199.500v8" stroke-width="1.400"/>
<path d="M677.500 210.500c4-1.500 8-1 10 1 2-2 6-2.500 10-1.500M678 215c3-2 7-2 9.500.5 2.500-2.500 7-2.500 11-1M677.500 222.500c2-2.500 5-3 7.500-1.500 2.500 1.500 5 1.500 8-.5 2-1.200 4-2 6-2" stroke-width="1.700"/>
<path d="M678 205.500l2 1.500M684 205l2 1.500M691 205.500l2 1.500" stroke-width="1"/>
<path d="M748 208.500c10-1.500 22-5.500 35-11.500" stroke-width="1.900"/>
<path d="M752 221c3 1.500 6 .5 7.500-2 1.500-3-.5-6-3-5.500-2.500.5-3 3.500-1 5 3 2 7 1.500 9.500-1 2-2.500 1.500-5.500-.5-7M766 212c2.500 2 3.500 5 2.500 8M762 205.500c3 1 6 3.500 7.500 6.500M771.500 203c3.500 3 5.500 7 5.500 12 0 4-2 7-5.500 8M778 201.500c3 4 4.500 9 4 14.500-.5 4-2.500 7-6 8M749 223.500c8 2.500 18 2.500 27-.5" stroke-width="2"/>
<path d="M764 201l1.500 1.500M768 199.500l1.500 1.500M779.500 197.500l1.500-2" stroke-width="1.100"/>
</g>
<g fill="#f2f7f2"><path d="M729 183.200l1.300 2.900 3.100.2-2.400 2 .8 3.100-2.800-1.700-2.800 1.700.8-3.100-2.400-2 3.100-.2z"/><path d="M741 189l.7 1.600 1.700.1-1.300 1.100.4 1.700-1.500-.9-1.500.9.400-1.700-1.300-1.100 1.700-.1zM748.500 198l.7 1.600 1.700.1-1.300 1.100.4 1.700-1.500-.9-1.500.9.400-1.700-1.300-1.100 1.700-.1zM745.500 220l.7 1.600 1.700.1-1.300 1.100.4 1.700-1.500-.9-1.500.9.400-1.700-1.300-1.100 1.700-.1z"/>
<text x="747.500" y="236.300" font-family="Liberation Serif, serif" font-size="13.500">U</text><path d="M739.500 227.500c2.500-1 4.500 0 4.500 2s-1.500 2.500-3 2.500c2 0 3.500 1 3.500 2.500s-2 2.500-5 1.500" fill="none" stroke="#f2f7f2" stroke-width="1.400"/>
<text x="734.500" y="236.300" font-family="Liberation Serif, serif" font-size="13.500">N</text></g>
<path d="M684 248c1-7 8-11 20-13h22c16 3 30 6 38.500 13z" fill="#15151a" filter="url(#b1)"/>
<path d="M728 232c4-1 7 0 9 2l-6 6z" fill="#1a1a1f"/>
<path d="M704 226h22v11h-22z" fill="#6e5243" filter="url(#b1)"/>
<path d="M697 208c-.5 8 .5 15 3.500 20.500 3 5 8 7.500 13.500 7.500s10-2.500 13.500-7c3-4.500 4.500-11 4.500-19l-1-6-16-3.500-16 3z" fill="#a17b67" filter="url(#b1)"/>
<path d="M697.500 210c1 9 3 16 8 21-5-2-8-8-8.500-16z" fill="#7a5a4a" filter="url(#b1)"/>
<ellipse cx="715" cy="205" rx="10" ry="3" fill="#b8937f" opacity=".8" filter="url(#b1)"/>
<path d="M699.300 206c-.5-7 1.500-14 5-18.500 2-2.500 5-3 8.500-2 5 1.500 9.500 5 12.500 9.500 2.500 4 4.500 8.500 5.200 13.500-5-3.500-10-5.500-16-5.500-5.500 0-10.500 1-15.200 3z" fill="#1e1822"/>
<g fill="#5a4238" fill-opacity=".55" stroke="#16161a" stroke-width="1.700"><rect x="698.500" y="209.800" width="12.500" height="9.800" rx="3.600"/><rect x="715.500" y="209.800" width="12.500" height="9.800" rx="3.600"/></g>
<path d="M711 213h4.500M728 212.500l3.500-1.500M698.500 212.500l-1.500-.5" stroke="#16161a" stroke-width="1.400" fill="none"/>
<ellipse cx="716" cy="230" rx="5.500" ry="1.500" fill="#5a3530" filter="url(#b1)"/>
<path d="M709 226.500c4-1.500 10-1.500 14 0" stroke="#6a4e42" stroke-width="1.300" fill="none" filter="url(#b1)"/>
</g>
<rect x="662.700" y="236" width="67.500" height="11.700" fill="#0b0b0b" opacity=".5"/>
<!-- /P2 -->
<!-- P3 -->
<g clip-path="url(#c3)">
<rect x="680" y="247.700" width="100" height="74" fill="url(#room)"/>
<rect x="680" y="247.700" width="40" height="74" fill="url(#roomL)"/>
<path d="M680 270l40-12.500 60 4.500v-15h-100z" fill="#c2c2c2" opacity=".75" filter="url(#b1)"/>
<path d="M740 248h40v12l-40-3z" fill="#dcdcdc" opacity=".7" filter="url(#b1)"/>
<ellipse cx="697" cy="299" rx="7" ry="10" fill="#474747" opacity=".8" filter="url(#b2)"/>
<rect x="680" y="306" width="34" height="16" fill="#8a8a8a" opacity=".45" filter="url(#b2)"/>
<path d="M714 322c1-6 4-9 9-11h25c5 2 8 5 9 11z" fill="#d0c6be" filter="url(#b1)"/>
<path d="M721.500 292c-1 7 0 13 3 17 3 3 7 4 11 4s8-1 11-4c3-4 4-10 3-17z" fill="#cfa890" filter="url(#b1)"/>
<path d="M718.500 293.500c-.6-7 .8-14 3.200-19 1-2 2.500-2.800 5-3 6-.8 12-.8 18 0 2.500.2 4 1 5 3 2.400 5 3.600 12 2.800 19-5-2.600-10-3.600-17-3.600s-12.500 1-17 3.600z" fill="#1b1b1e"/>
<path d="M718.800 292.500c-1 4.500-.5 9 1.200 12.500l2.400-1c-1.400-3.500-1.600-7-.8-10.500zM752.300 292.500c1 4.500.5 9-1.200 12.500l-2.400-1c1.400-3.500 1.600-7 .8-10.500z" fill="#26211f" filter="url(#b1)"/>
<path d="M726 307c2.500-1.300 5.500-1.300 7.500-.3M738 306.700c2.500-1 5.500-1 7.500.3" stroke="#4a342b" stroke-width="1.200" fill="none" filter="url(#b1)"/>
</g>
<rect x="662.700" y="311.300" width="128" height="10" fill="#0c0c0c" opacity=".78"/>
<!-- /P3 -->
<!-- muted mic icons -->
<g fill="#e8483c"><path d="M670 238.500a1.300 1.300 0 0 1 2.600 0v2.600a1.300 1.300 0 0 1-2.600 0zM668.800 241.500c0 3.400 5 3.400 5 0h-.8c0 2.300-3.400 2.300-3.400 0zM670.900 244h.8v1.800h-.8z"/><path d="M668.300 245.500l5.800-7 .6.500-5.800 7z"/>
<path d="M669 312.800a1.300 1.300 0 0 1 2.600 0v2.600a1.300 1.300 0 0 1-2.600 0zM667.800 315.800c0 3.400 5 3.400 5 0h-.8c0 2.300-3.400 2.300-3.400 0zM669.900 318.300h.8v1.800h-.8z"/><path d="M667.300 319.800l5.800-7 .6.500-5.800 7z"/></g>
</svg>
<div class="t" style="left:667px;top:162px;font-size:7.800px;line-height:10px;color:#fff">abu bakar</div>
<div class="t" style="left:677.800px;top:237px;font-size:7.500px;line-height:10px;color:#fff">Achmad Gazali</div>
<div class="t" style="left:677.800px;top:311px;font-size:7.850px;line-height:10px;color:#fff">Muhammad Miqdam Musawwa</div>
<!-- ===== Status bar ===== -->
<div class="a" id="status" style="left:0;top:429.500px;width:800px;height:4.700px;background:#f1f1f1;overflow:hidden">
<div class="a" style="left:8px;top:2.900px;width:9px;height:1.800px;background:repeating-linear-gradient(90deg,#666 0 1.200px,transparent 1.200px 2.800px);opacity:.8"></div><div class="a" style="left:20px;top:2.900px;width:3px;height:1.800px;background:repeating-linear-gradient(90deg,#666 0 1.200px,transparent 1.200px 2.800px);opacity:.8"></div><div class="a" style="left:28px;top:2.900px;width:10px;height:1.800px;background:repeating-linear-gradient(90deg,#666 0 1.200px,transparent 1.200px 2.800px);opacity:.8"></div><div class="a" style="left:50px;top:2.900px;width:12px;height:1.800px;background:repeating-linear-gradient(90deg,#666 0 1.200px,transparent 1.200px 2.800px);opacity:.8"></div><div class="a" style="left:70px;top:2.900px;width:12px;height:1.800px;background:repeating-linear-gradient(90deg,#666 0 1.200px,transparent 1.200px 2.800px);opacity:.8"></div><div class="a" style="left:98px;top:2.900px;width:20px;height:1.800px;background:repeating-linear-gradient(90deg,#666 0 1.200px,transparent 1.200px 2.800px);opacity:.8"></div><div class="a" style="left:121px;top:2.900px;width:24px;height:1.800px;background:repeating-linear-gradient(90deg,#666 0 1.200px,transparent 1.200px 2.800px);opacity:.8"></div>
<div class="a" style="left:157px;top:2.300px;width:6px;height:4px;border:.8px solid #555;box-sizing:border-box"></div>
<div class="a" style="left:639px;top:2.900px;width:7px;height:4px;border:.8px solid #888;box-sizing:border-box"></div>
<div class="a" style="left:657px;top:0;width:23px;height:5px;background:#c6c6c6"></div>
<div class="a" style="left:665px;top:2.400px;width:7px;height:4px;border:.8px solid #666;box-sizing:border-box"></div>
<div class="a" style="left:688px;top:2.900px;width:7px;height:4px;border:.8px solid #888;box-sizing:border-box"></div>
<div class="a" style="left:744px;top:3.200px;width:5px;height:.8px;background:#555"></div>
<div class="a" style="left:781px;top:2.900px;width:17px;height:1.800px;background:repeating-linear-gradient(90deg,#666 0 1.200px,transparent 1.200px 2.800px);opacity:.8"></div>
</div>
</body></html>
